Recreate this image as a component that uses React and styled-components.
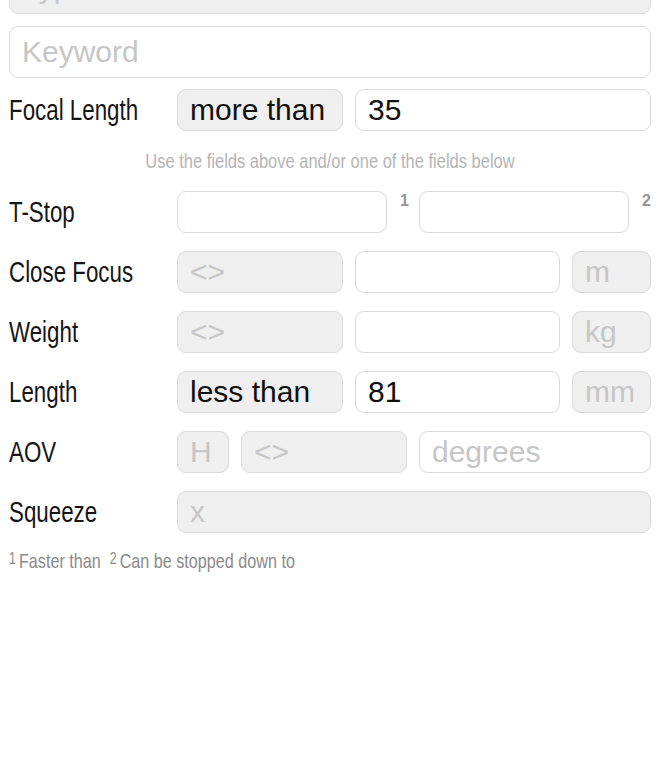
import React from "react";
import styled, { createGlobalStyle } from "styled-components";

const GlobalStyle = createGlobalStyle`
    body {
        margin: 0;
        background: #ffffff;
        font-family: "Liberation Sans", Arial, sans-serif;
    }
`;

// no condensed face is installed, so the narrow look is made by squeezing Liberation Sans
const condensed = `"Liberation Sans", Arial, sans-serif`;

const Page = styled.div`
    width: 660px;
    height: 760px;
    overflow: hidden;
    box-sizing: border-box;
    padding: 0 9px;
`;

const Form = styled.div`
    display: flex;
    flex-direction: column;
    margin-top: -38px;
`;

const Field = styled.input`
    box-sizing: border-box;
    width: 100%;
    min-width: 0;
    height: ${(p) => (p.$tall ? "52px" : "42px")};
    padding: 0 12px;
    border: 1.5px solid #dadada;
    border-radius: 9px;
    background: ${(p) => (p.$muted ? "#efefef" : "#ffffff")};
    font-family: "Liberation Sans", Arial, sans-serif;
    font-size: 30px;
    color: #111111;
    outline: none;

    &::placeholder {
        color: #c6c6c6;
    }
`;

const TopGap = styled.div`
    height: 12px;
`;

const Row = styled.div`
    display: grid;
    grid-template-columns: 156px 1fr;
    column-gap: 12px;
    align-items: center;
    margin-top: ${(p) => p.$top || "18px"};
`;

const Label = styled.div`
    font-family: ${condensed};
    font-size: 29px;
    color: #151515;
    white-space: nowrap;
    transform: scaleX(0.77);
    transform-origin: left center;
`;

const Controls = styled.div`
    display: grid;
    grid-template-columns: ${(p) => p.$cols};
    column-gap: ${(p) => p.$gap || "12px"};
    align-items: start;
`;

const Pair = styled.div`
    display: flex;
    align-items: flex-start;
`;

const Sup = styled.span`
    width: 22px;
    flex: none;
    text-align: right;
    margin-top: 1px;
    font-family: "Liberation Sans", Arial, sans-serif;
    font-size: 16px;
    font-weight: bold;
    color: #949494;
`;

const Hint = styled.div`
    margin-top: 18px;
    height: 24px;
    line-height: 24px;
    text-align: center;
    white-space: nowrap;
    font-family: ${condensed};
    font-size: 21px;
    color: #b4b4b4;
    transform: scaleX(0.785);
`;

const Footnote = styled.div`
    margin-top: 16px;
    white-space: nowrap;
    font-family: ${condensed};
    font-size: 21px;
    color: #8a8a8a;
    transform: scaleX(0.77);
    transform-origin: left center;

    sup {
        font-size: 16px;
        vertical-align: 4px;
        margin-right: 4px;
    }
`;

function App() {
    return (
        <>
            <GlobalStyle />
            <Page>
                <Form>
                    <Field $tall $muted readOnly placeholder="Type" />
                    <TopGap />
                    <Field $tall readOnly placeholder="Keyword" />

                    <Row $top="11px">
                        <Label>Focal Length</Label>
                        <Controls $cols="166px 1fr">
                            <Field $muted readOnly defaultValue="more than" />
                            <Field readOnly defaultValue="35" />
                        </Controls>
                    </Row>

                    <Hint>Use the fields above and/or one of the fields below</Hint>

                    <Row>
                        <Label>T-Stop</Label>
                        <Controls $cols="1fr 1fr" $gap="10px">
                            <Pair>
                                <Field readOnly />
                                <Sup>1</Sup>
                            </Pair>
                            <Pair>
                                <Field readOnly />
                                <Sup>2</Sup>
                            </Pair>
                        </Controls>
                    </Row>

                    <Row>
                        <Label>Close Focus</Label>
                        <Controls $cols="166px 1fr 79px">
                            <Field $muted readOnly placeholder="<>" />
                            <Field readOnly />
                            <Field $muted readOnly placeholder="m" />
                        </Controls>
                    </Row>

                    <Row>
                        <Label>Weight</Label>
                        <Controls $cols="166px 1fr 79px">
                            <Field $muted readOnly placeholder="<>" />
                            <Field readOnly />
                            <Field $muted readOnly placeholder="kg" />
                        </Controls>
                    </Row>

                    <Row>
                        <Label>Length</Label>
                        <Controls $cols="166px 1fr 79px">
                            <Field $muted readOnly defaultValue="less than" />
                            <Field readOnly defaultValue="81" />
                            <Field $muted readOnly placeholder="mm" />
                        </Controls>
                    </Row>

                    <Row>
                        <Label>AOV</Label>
                        <Controls $cols="52px 166px 1fr">
                            <Field $muted readOnly placeholder="H" />
                            <Field $muted readOnly placeholder="<>" />
                            <Field readOnly placeholder="degrees" />
                        </Controls>
                    </Row>

                    <Row>
                        <Label>Squeeze</Label>
                        <Controls $cols="1fr">
                            <Field $muted readOnly placeholder="x" />
                        </Controls>
                    </Row>

                    <Footnote>
                        <sup>1</sup>Faster than&nbsp;&nbsp;<sup>2</sup>Can be stopped down to
                    </Footnote>
                </Form>
            </Page>
        </>
    );
}

export default App;
